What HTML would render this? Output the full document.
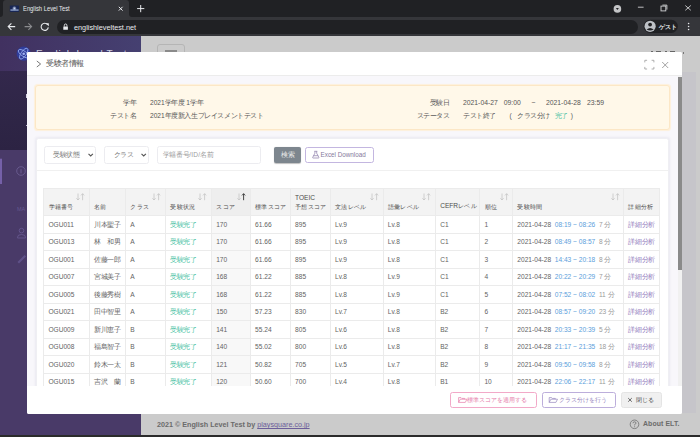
<!DOCTYPE html>
<html><head><meta charset="utf-8">
<style>
*{box-sizing:border-box;margin:0;padding:0}
html,body{width:700px;height:437px;overflow:hidden;background:#cbcbcb;font-family:"Liberation Sans",sans-serif;}
.abs{position:absolute}
/* chrome */
#tabstrip{left:0;top:0;width:700px;height:17px;background:#202124}
#tab{left:3px;top:0;width:126px;height:17px;background:#35363a;border-radius:3px 3px 0 0}
#toolbar{left:0;top:17px;width:700px;height:19px;background:#35363a}
#omni{left:56.8px;top:19.5px;width:581.7px;height:14px;background:#202124;border-radius:7px}
.ct{color:#e8eaed;font-size:7.6px;white-space:nowrap}
/* page */
#sidebar{left:0;top:36px;width:141px;height:401px;background:#493a68}
#sbhead{left:0;top:36px;width:141px;height:35px;background:linear-gradient(90deg,#413160,#454071)}
#sbstars{left:0;top:71px;width:141px;height:79px;background:linear-gradient(180deg,#33284c,#2f2647 50%,#2c2343)}
#main{left:141px;top:36px;width:559px;height:401px;background:#cbcbcb}
#bottomline{left:0;top:435px;width:700px;height:2px;background:#2b2b2b}
/* modal */
#modal{left:27px;top:52px;width:655px;height:362px;background:#fff;border-radius:2px;overflow:hidden}
#mhead{left:0;top:0;width:655px;height:24px;border-bottom:1px solid #ececec;background:#fff}
#mbody{left:0;top:24px;width:651px;height:310px;background:#f8f7fb;overflow:hidden}
#mscroll{left:651px;top:24px;width:4px;height:310px;background:#f1f1f1}
#mthumb{left:651px;top:25px;width:4px;height:193px;background:#8a8a8a}
#mfoot{left:0;top:334px;width:655px;height:28px;background:#fff}
.t{font-size:6.6px;color:#555;white-space:nowrap;line-height:1}
#info{left:8px;top:9px;width:634.5px;height:45px;background:#fff8e9;border:1px solid #fce7c6;border-radius:3px;box-shadow:0 0 0.8px 0.6px #fdf0dc}
#card{left:8.5px;top:62px;width:633px;height:300px;background:#fff;border:1px solid #efeff3;border-radius:2.5px;box-shadow:0 0 2.5px 0.5px rgba(60,50,110,0.07)}
.sel{height:18px;border:1px solid #ececf0;border-radius:2.5px;background:#fff}
table{border-collapse:collapse;table-layout:fixed;position:absolute;left:6.6px;top:49.2px;width:616.1px}
td,th{border:1px solid #ebebeb;font-size:6.6px;color:#636363;font-weight:normal;text-align:left;white-space:nowrap;overflow:hidden;padding:0 0 0 4.3px;height:17.56px;line-height:1;padding-top:1px}
th{background:#f3f3f3;height:26.9px;vertical-align:bottom;padding-bottom:5.3px;font-size:6.25px;color:#4d4d4d;position:relative}
th.sorted{background:#eeeeee}
td.sorted{background:#f8f8f8}
.si{position:absolute;right:3.5px;top:4.3px}
.g{color:#46bfa2}
.b{color:#5b9edb}
.l{color:#9a9a9a}
.p{color:#917dbd;letter-spacing:0.3px}
.btn{height:16.5px;border:1px solid;border-radius:2px;font-size:6.6px;white-space:nowrap;display:flex;align-items:center;justify-content:center}
i{font-style:normal;display:inline-block;width:1em;text-align:center}
</style></head><body>
<!-- chrome -->
<div id="tabstrip" class="abs"></div>
<div id="tab" class="abs"></div>
<div id="toolbar" class="abs"></div>
<div id="omni" class="abs"></div>
<svg class="abs" style="left:0;top:0" width="700" height="36">
  <!-- tab corners -->
  <path d="M0 17 Q3 17 3 14 L3 17 Z" fill="#35363a"/>
  <path d="M129 14 Q129 17 132 17 L129 17 Z" fill="#35363a"/>
  <!-- favicon -->
  <defs><radialGradient id="fg" cx="0.5" cy="0.5" r="0.5"><stop offset="0" stop-color="#d6e4ff"/><stop offset="1" stop-color="#d6e4ff" stop-opacity="0"/></radialGradient></defs>
  <rect x="9.8" y="5.5" width="9.3" height="6.4" rx="0.6" fill="#182654"/>
  <circle cx="14.4" cy="8.3" r="2.4" fill="url(#fg)"/>
  <rect x="10.4" y="9.5" width="8.2" height="1.1" fill="#a9bde6"/>
  <!-- tab close -->
  <path d="M118.8 6.8 L122.6 10.6 M122.6 6.8 L118.8 10.6" stroke="#e8eaed" stroke-width="1" fill="none"/>
  <!-- new tab plus -->
  <path d="M140.7 5 V12.2 M137.1 8.6 H144.3" stroke="#e8eaed" stroke-width="1" fill="none"/>
  <!-- back -->
  <path d="M15.2 26.6 H8.2 M11.4 23.4 L8.2 26.6 L11.4 29.8" stroke="#e8eaed" stroke-width="1.1" fill="none"/>
  <!-- forward -->
  <path d="M24.6 26.6 H31.6 M28.4 23.4 L31.6 26.6 L28.4 29.8" stroke="#8a8b8e" stroke-width="1.1" fill="none"/>
  <!-- reload -->
  <path d="M47.6 24.6 A3.6 3.6 0 1 0 48.3 27.3" stroke="#e8eaed" stroke-width="1.1" fill="none"/>
  <path d="M45.6 23.3 L48.8 23.3 L48.8 26.3 Z" fill="#e8eaed"/>
  <!-- lock -->
  <rect x="63.3" y="26.4" width="4.6" height="3.4" rx="0.4" fill="#e8eaed"/>
  <path d="M64.3 26.6 V25.3 A1.3 1.3 0 0 1 66.9 25.3 V26.6" stroke="#e8eaed" stroke-width="0.9" fill="none"/>
  <!-- window controls -->
  <circle cx="617.4" cy="8.9" r="3.8" fill="#c4c5c7"/>
  <path d="M615.9 8 L618.9 8 L617.4 10.1 Z" fill="#202124"/>
  <path d="M637.9 7.2 H643.6" stroke="#d0d1d3" stroke-width="0.9"/>
  <rect x="661" y="6.1" width="4.8" height="4.8" stroke="#d0d1d3" stroke-width="0.9" fill="none"/>
  <path d="M662.4 5.1 H666.9 V9.6" stroke="#d0d1d3" stroke-width="0.9" fill="none"/>
  <path d="M685.3 5.5 L690.8 10.3 M690.8 5.5 L685.3 10.3" stroke="#d0d1d3" stroke-width="0.9" fill="none"/>
  <!-- profile pill -->
  <rect x="643.6" y="19.7" width="34.3" height="13.3" rx="6.65" fill="#202124"/>
  <circle cx="650.1" cy="26.3" r="5.6" fill="#bdc1c6"/>
  <circle cx="650.1" cy="24.6" r="1.9" fill="#202124"/>
  <path d="M646.6 29.4 Q650.1 26.4 653.6 29.4 Q650.1 31.6 646.6 29.4 Z" fill="#202124"/>
  <!-- menu dots -->
  <circle cx="688.6" cy="23.5" r="0.8" fill="#e8eaed"/>
  <circle cx="688.6" cy="26.5" r="0.8" fill="#e8eaed"/>
  <circle cx="688.6" cy="29.5" r="0.8" fill="#e8eaed"/>
</svg>
<div class="abs ct" style="left:22.8px;top:4.9px;font-size:7px;color:#e8eaed;transform:scaleX(0.83);transform-origin:0 0">English Level Test</div>
<div class="abs ct" style="left:74px;top:23.2px;font-size:7.3px">englishleveltest.net</div>
<div class="abs ct" style="left:659.3px;top:23px;font-size:6px;font-weight:bold"><i>ゲ</i><i>ス</i><i>ト</i></div>
<!-- page -->
<div id="sidebar" class="abs"></div>
<div id="sbhead" class="abs"></div>
<div id="sbstars" class="abs"></div>
<div id="main" class="abs"></div>
<div class="abs" style="left:25.5px;top:94px;width:1.5px;height:4px;background:#d8d4e4"></div>
<div class="abs" style="left:25.5px;top:124.5px;width:1.5px;height:1.2px;background:#bdb6d0"></div>
<div class="abs" style="left:651px;top:50.6px;width:1.5px;height:1.6px;background:#666"></div>
<div class="abs" style="left:656px;top:50.6px;width:5px;height:1.6px;background:#666"></div>
<div class="abs" style="left:665px;top:50.6px;width:1.5px;height:1.6px;background:#666"></div>
<div class="abs" style="left:669.5px;top:50.6px;width:5.5px;height:1.6px;background:#666"></div>
<div class="abs" style="left:683px;top:52px;width:1.2px;height:2px;background:#777"></div>
<div class="abs" style="left:682px;top:72px;width:13.8px;height:340.5px;background:#c6c5ca"></div>
<svg class="abs" style="left:0;top:36px" width="141" height="401">
  <circle cx="23.7" cy="17.7" r="7.1" fill="#2f3c9a"/>
  <ellipse cx="23.7" cy="17.7" rx="6.3" ry="2.6" transform="rotate(-55 23.7 17.7)" stroke="#8fa6ea" stroke-width="0.9" fill="none"/>
  <ellipse cx="23.7" cy="17.7" rx="6.3" ry="2.6" transform="rotate(35 23.7 17.7)" stroke="#8fa6ea" stroke-width="0.9" fill="none"/>
  <circle cx="23.7" cy="17.7" r="1.3" fill="#9fb3f0"/>
  <rect x="0" y="122.7" width="2" height="25.3" fill="#7560a8"/>
  <circle cx="21" cy="135" r="4.3" stroke="#6f6196" stroke-width="0.8" fill="none"/>
  <path d="M21 133.2 V137.4" stroke="#6f6196" stroke-width="0.9"/>
  <path d="M17.5 201.3 Q17.5 198.5 21.5 198.5 Q25.5 198.5 25.5 201.3 V202 H17.5 Z" stroke="#6a5b94" stroke-width="0.8" fill="none"/>
  <circle cx="21.5" cy="194.6" r="2.3" stroke="#6a5b94" stroke-width="0.8" fill="none"/>
  <path d="M17.5 226 L24.5 219 L26 220.5 L19 227.5 Z" fill="#5f5188"/>
</svg>
<div class="abs" style="left:17px;top:205.7px;font-size:5.5px;color:#64578f;white-space:nowrap">MA</div>
<div class="abs" style="left:36px;top:49px;font-size:10px;color:#cfd0e0;white-space:nowrap;letter-spacing:0.6px">English Level Test</div>
<div class="abs" style="left:157px;top:44px;width:28px;height:20px;border:1px solid #b5b5b5;border-radius:3px"></div>
<div class="abs" style="left:165px;top:50.3px;width:12px;height:1.4px;background:#8a8a8a"></div>
<div class="abs" style="left:157px;top:420px;font-size:7.2px;color:#6a6a6a;font-weight:bold;white-space:nowrap">2021 © English Level Test by <span style="color:#6c5e9a;text-decoration:underline;font-weight:normal">playsquare.co.jp</span></div>
<div class="abs" style="left:643px;top:420.2px;font-size:6.9px;color:#6a6a6a;font-weight:bold;white-space:nowrap;letter-spacing:0.1px">About ELT.</div>
<svg class="abs" style="left:628px;top:418px" width="14" height="14"><circle cx="6.5" cy="6.3" r="4.3" stroke="#6e6e6e" stroke-width="0.8" fill="none"/><path d="M5 5.2 Q5 3.8 6.5 3.8 Q8 3.8 8 5.1 Q8 6 6.6 6.6 V7.4" stroke="#6e6e6e" stroke-width="0.8" fill="none"/><circle cx="6.6" cy="8.8" r="0.5" fill="#6e6e6e"/></svg>
<div id="bottomline" class="abs"></div>

<!-- modal -->
<div id="modal" class="abs">
  <div id="mhead" class="abs">
    <svg class="abs" style="left:0;top:0" width="655" height="24">
      <path d="M9.8 9 L13.6 12 L9.8 15" stroke="#666" stroke-width="0.9" fill="none"/>
      <path d="M617.8 10.4 V8.3 H620.1 M624.6 8.3 H626.9 V10.4 M626.9 14.9 V17 H624.6 M620.1 17 H617.8 V14.9" stroke="#9a9a9a" stroke-width="0.8" fill="none"/>
      <path d="M635.2 10 L641.2 16 M641.2 10 L635.2 16" stroke="#8a8a8a" stroke-width="0.8" fill="none"/>
    </svg>
    <div class="abs t" style="left:19px;top:8px;font-size:7.6px;color:#555"><i>受</i><i>験</i><i>者</i><i>情</i><i>報</i></div>
  </div>
  <div id="mbody" class="abs">
    <div id="info" class="abs">
      <div class="abs t" style="right:532px;top:13.8px"><i>学</i><i>年</i></div>
      <div class="abs t" style="left:114px;top:13.8px">2021<i>学</i><i>年</i><i>度</i> 1<i>学</i><i>年</i></div>
      <div class="abs t" style="right:532px;top:26.9px"><i>テ</i><i>ス</i><i>ト</i><i>名</i></div>
      <div class="abs t" style="left:114px;top:26.9px">2021<i>年</i><i>度</i><i>新</i><i>入</i><i>生</i><i>プ</i><i>レ</i><i>イ</i><i>ス</i><i>メ</i><i>ン</i><i>ト</i><i>テ</i><i>ス</i><i>ト</i></div>
      <div class="abs t" style="right:219px;top:13.8px"><i>受</i><i>験</i><i>日</i></div>
      <div class="abs t" style="left:427px;top:13.8px;font-size:6.8px">2021-04-27</div>
      <div class="abs t" style="left:467.8px;top:13.8px;font-size:6.8px">09:00</div>
      <div class="abs t" style="left:495.5px;top:13.8px;font-size:6.8px">~</div>
      <div class="abs t" style="left:510px;top:13.8px;font-size:6.8px">2021-04-28</div>
      <div class="abs t" style="left:551px;top:13.8px;font-size:6.8px">23:59</div>
      <div class="abs t" style="right:219px;top:26.9px"><i>ス</i><i>テ</i><i>ー</i><i>タ</i><i>ス</i></div>
      <div class="abs t" style="left:427px;top:26.9px"><i>テ</i><i>ス</i><i>ト</i><i>終</i><i>了</i></div>
      <div class="abs t" style="left:473.5px;top:26.9px">(</div>
      <div class="abs t" style="left:481px;top:26.9px;letter-spacing:0.3px"><i>ク</i><i>ラ</i><i>ス</i><i>分</i><i>け</i></div>
      <div class="abs t g" style="left:518.7px;top:26.9px"><i>完</i><i>了</i></div>
      <div class="abs t" style="left:534.8px;top:26.9px">)</div>
    </div>
    <div id="card" class="abs">
      <div class="abs sel" style="left:7.5px;top:7.3px;width:52px"></div>
      <div class="abs t" style="left:16.5px;top:13px;color:#777"><i>受</i><i>験</i><i>状</i><i>態</i></div>
      <div class="abs sel" style="left:67.5px;top:7.3px;width:45px"></div>
      <div class="abs t" style="left:77px;top:13px;color:#777;letter-spacing:0.3px"><i>ク</i><i>ラ</i><i>ス</i></div>
      <div class="abs sel" style="left:120.5px;top:7.3px;width:104px"></div>
      <div class="abs t" style="left:126.4px;top:13.4px;color:#9c9c9c;font-size:6.6px;letter-spacing:0.2px"><i>学</i><i>籍</i><i>番</i><i>号</i>/ID/<i>名</i><i>前</i></div>
      <svg class="abs" style="left:0;top:0" width="400" height="30">
        <path d="M51.5 14.8 L53.7 17 L55.9 14.8" stroke="#555" stroke-width="1.1" fill="none"/>
        <path d="M104.5 14.8 L106.7 17 L108.9 14.8" stroke="#555" stroke-width="1.1" fill="none"/>
      </svg>
      <div class="abs" style="left:237.5px;top:7.5px;width:27.3px;height:16.5px;background:#7d868e;border-radius:2px;box-shadow:0 0.5px 1px rgba(0,0,0,0.25)"></div>
      <div class="abs t" style="left:244.5px;top:12.8px;color:#e8e8e8;font-size:6.5px"><i>検</i><i>索</i></div>
      <div class="abs" style="left:268.3px;top:7.5px;width:69.5px;height:16.5px;border:1px solid #c3b6e0;border-radius:2.5px;background:#fff"></div>
      <svg class="abs" style="left:0;top:0" width="400" height="30">
        <path d="M277.9 12.3 V14.2 L275.7 18.4 Q275.5 19 276.1 19 H281.5 Q282.1 19 281.9 18.4 L279.7 14.2 V12.3" stroke="#8a7aa8" stroke-width="0.7" fill="none"/>
        <path d="M277.3 12.3 H280.3 M276.5 16.7 H281.1" stroke="#8a7aa8" stroke-width="0.7" fill="none"/>
      </svg>
      <div class="abs t" style="left:284.1px;top:13px;color:#857a9c;font-size:6.3px">Excel Download</div>
      <div class="abs" style="left:0;top:31px;width:631px;height:1px;background:#f0f0f0"></div>
      <table>
        <colgroup><col style="width:45.7px"><col style="width:36.1px"><col style="width:40px"><col style="width:46px"><col style="width:38.9px"><col style="width:40px"><col style="width:40px"><col style="width:52.8px"><col style="width:52.3px"><col style="width:44.3px"><col style="width:32.9px"><col style="width:111px"><col style="width:36.1px"></colgroup>
        <tr><th><i>学</i><i>籍</i><i>番</i><i>号</i><svg class="si" width="9" height="8" viewBox="0 0 9 8"><path d="M2 0.5 V7 M0.4 5.3 L2 7 L3.6 5.3" stroke="#c4c4c4" stroke-width="0.8" fill="none"/><path d="M6.6 7.2 V0.7 M5 2.4 L6.6 0.7 L8.2 2.4" stroke="#c4c4c4" stroke-width="0.8" fill="none"/></svg></th><th><i>名</i><i>前</i></th><th><i>ク</i><i>ラ</i><i>ス</i><svg class="si" width="9" height="8" viewBox="0 0 9 8"><path d="M2 0.5 V7 M0.4 5.3 L2 7 L3.6 5.3" stroke="#c4c4c4" stroke-width="0.8" fill="none"/><path d="M6.6 7.2 V0.7 M5 2.4 L6.6 0.7 L8.2 2.4" stroke="#c4c4c4" stroke-width="0.8" fill="none"/></svg></th><th><i>受</i><i>験</i><i>状</i><i>況</i><svg class="si" width="9" height="8" viewBox="0 0 9 8"><path d="M2 0.5 V7 M0.4 5.3 L2 7 L3.6 5.3" stroke="#c4c4c4" stroke-width="0.8" fill="none"/><path d="M6.6 7.2 V0.7 M5 2.4 L6.6 0.7 L8.2 2.4" stroke="#c4c4c4" stroke-width="0.8" fill="none"/></svg></th><th class="sorted"><i>ス</i><i>コ</i><i>ア</i><svg class="si" width="9" height="8" viewBox="0 0 9 8"><path d="M2 0.5 V7 M0.4 5.3 L2 7 L3.6 5.3" stroke="#c4c4c4" stroke-width="0.8" fill="none"/><path d="M6.6 7.2 V0.7 M5 2.4 L6.6 0.7 L8.2 2.4" stroke="#333" stroke-width="0.9" fill="none"/></svg></th><th><i>標</i><i>準</i><i>ス</i><i>コ</i><i>ア</i></th><th><span style="font-size:6.6px;display:block;margin-bottom:2.3px">TOEIC</span><i>予</i><i>想</i><i>ス</i><i>コ</i><i>ア</i></th><th><i>文</i><i>法</i><i>レ</i><i>ベ</i><i>ル</i><svg class="si" width="9" height="8" viewBox="0 0 9 8"><path d="M2 0.5 V7 M0.4 5.3 L2 7 L3.6 5.3" stroke="#c4c4c4" stroke-width="0.8" fill="none"/><path d="M6.6 7.2 V0.7 M5 2.4 L6.6 0.7 L8.2 2.4" stroke="#c4c4c4" stroke-width="0.8" fill="none"/></svg></th><th><i>語</i><i>彙</i><i>レ</i><i>ベ</i><i>ル</i><svg class="si" width="9" height="8" viewBox="0 0 9 8"><path d="M2 0.5 V7 M0.4 5.3 L2 7 L3.6 5.3" stroke="#c4c4c4" stroke-width="0.8" fill="none"/><path d="M6.6 7.2 V0.7 M5 2.4 L6.6 0.7 L8.2 2.4" stroke="#c4c4c4" stroke-width="0.8" fill="none"/></svg></th><th><span style="font-size:6.6px">CEFR</span><i>レ</i><i>ベ</i><i>ル</i></th><th><i>順</i><i>位</i><svg class="si" width="9" height="8" viewBox="0 0 9 8"><path d="M2 0.5 V7 M0.4 5.3 L2 7 L3.6 5.3" stroke="#c4c4c4" stroke-width="0.8" fill="none"/><path d="M6.6 7.2 V0.7 M5 2.4 L6.6 0.7 L8.2 2.4" stroke="#c4c4c4" stroke-width="0.8" fill="none"/></svg></th><th><i>受</i><i>験</i><i>時</i><i>間</i><svg class="si" width="9" height="8" viewBox="0 0 9 8"><path d="M2 0.5 V7 M0.4 5.3 L2 7 L3.6 5.3" stroke="#c4c4c4" stroke-width="0.8" fill="none"/><path d="M6.6 7.2 V0.7 M5 2.4 L6.6 0.7 L8.2 2.4" stroke="#c4c4c4" stroke-width="0.8" fill="none"/></svg></th><th><i>詳</i><i>細</i><i>分</i><i>析</i></th></tr>
        <tr><td>OGU011</td><td><i>川</i><i>本</i><i>聖</i><i>子</i></td><td>A</td><td class="g"><i>受</i><i>験</i><i>完</i><i>了</i></td><td class="sorted">170</td><td>61.66</td><td>895</td><td>Lv.9</td><td>Lv.8</td><td>C1</td><td>1</td><td>2021-04-28 &nbsp;<span class="b">08:19 ~ 08:26</span>&nbsp; <span class="l">7 <i>分</i></span></td><td class="p"><i>詳</i><i>細</i><i>分</i><i>析</i></td></tr>
<tr><td>OGU013</td><td><i>林</i><i>　</i><i>和</i><i>男</i></td><td>A</td><td class="g"><i>受</i><i>験</i><i>完</i><i>了</i></td><td class="sorted">170</td><td>61.66</td><td>895</td><td>Lv.9</td><td>Lv.8</td><td>C1</td><td>2</td><td>2021-04-28 &nbsp;<span class="b">08:49 ~ 08:57</span>&nbsp; <span class="l">8 <i>分</i></span></td><td class="p"><i>詳</i><i>細</i><i>分</i><i>析</i></td></tr>
<tr><td>OGU001</td><td><i>佐</i><i>藤</i><i>一</i><i>郎</i></td><td>A</td><td class="g"><i>受</i><i>験</i><i>完</i><i>了</i></td><td class="sorted">170</td><td>61.66</td><td>895</td><td>Lv.9</td><td>Lv.8</td><td>C1</td><td>3</td><td>2021-04-28 &nbsp;<span class="b">14:43 ~ 20:18</span>&nbsp; <span class="l">8 <i>分</i></span></td><td class="p"><i>詳</i><i>細</i><i>分</i><i>析</i></td></tr>
<tr><td>OGU007</td><td><i>宮</i><i>城</i><i>美</i><i>子</i></td><td>A</td><td class="g"><i>受</i><i>験</i><i>完</i><i>了</i></td><td class="sorted">168</td><td>61.22</td><td>885</td><td>Lv.8</td><td>Lv.9</td><td>C1</td><td>4</td><td>2021-04-28 &nbsp;<span class="b">20:22 ~ 20:29</span>&nbsp; <span class="l">7 <i>分</i></span></td><td class="p"><i>詳</i><i>細</i><i>分</i><i>析</i></td></tr>
<tr><td>OGU005</td><td><i>後</i><i>藤</i><i>秀</i><i>樹</i></td><td>A</td><td class="g"><i>受</i><i>験</i><i>完</i><i>了</i></td><td class="sorted">168</td><td>61.22</td><td>885</td><td>Lv.8</td><td>Lv.9</td><td>C1</td><td>5</td><td>2021-04-28 &nbsp;<span class="b">07:52 ~ 08:02</span>&nbsp; <span class="l">11 <i>分</i></span></td><td class="p"><i>詳</i><i>細</i><i>分</i><i>析</i></td></tr>
<tr><td>OGU021</td><td><i>田</i><i>中</i><i>智</i><i>里</i></td><td>A</td><td class="g"><i>受</i><i>験</i><i>完</i><i>了</i></td><td class="sorted">150</td><td>57.23</td><td>830</td><td>Lv.7</td><td>Lv.8</td><td>B2</td><td>6</td><td>2021-04-28 &nbsp;<span class="b">08:57 ~ 09:20</span>&nbsp; <span class="l">23 <i>分</i></span></td><td class="p"><i>詳</i><i>細</i><i>分</i><i>析</i></td></tr>
<tr><td>OGU009</td><td><i>新</i><i>川</i><i>恵</i><i>子</i></td><td>B</td><td class="g"><i>受</i><i>験</i><i>完</i><i>了</i></td><td class="sorted">141</td><td>55.24</td><td>805</td><td>Lv.6</td><td>Lv.8</td><td>B2</td><td>7</td><td>2021-04-28 &nbsp;<span class="b">20:33 ~ 20:39</span>&nbsp; <span class="l">5 <i>分</i></span></td><td class="p"><i>詳</i><i>細</i><i>分</i><i>析</i></td></tr>
<tr><td>OGU008</td><td><i>福</i><i>島</i><i>智</i><i>子</i></td><td>B</td><td class="g"><i>受</i><i>験</i><i>完</i><i>了</i></td><td class="sorted">140</td><td>55.02</td><td>800</td><td>Lv.6</td><td>Lv.8</td><td>B2</td><td>8</td><td>2021-04-28 &nbsp;<span class="b">21:17 ~ 21:35</span>&nbsp; <span class="l">18 <i>分</i></span></td><td class="p"><i>詳</i><i>細</i><i>分</i><i>析</i></td></tr>
<tr><td>OGU020</td><td><i>鈴</i><i>木</i><i>一</i><i>太</i></td><td>B</td><td class="g"><i>受</i><i>験</i><i>完</i><i>了</i></td><td class="sorted">121</td><td>50.82</td><td>705</td><td>Lv.5</td><td>Lv.7</td><td>B2</td><td>9</td><td>2021-04-28 &nbsp;<span class="b">09:50 ~ 09:58</span>&nbsp; <span class="l">8 <i>分</i></span></td><td class="p"><i>詳</i><i>細</i><i>分</i><i>析</i></td></tr>
<tr><td>OGU015</td><td><i>吉</i><i>沢</i><i>　</i><i>蘭</i></td><td>B</td><td class="g"><i>受</i><i>験</i><i>完</i><i>了</i></td><td class="sorted">120</td><td>50.60</td><td>700</td><td>Lv.4</td><td>Lv.8</td><td>B1</td><td>10</td><td>2021-04-28 &nbsp;<span class="b">22:06 ~ 22:17</span>&nbsp; <span class="l">11 <i>分</i></span></td><td class="p"><i>詳</i><i>細</i><i>分</i><i>析</i></td></tr>
      </table>
    </div>
  </div>
  <div id="mscroll" class="abs"></div>
  <div id="mthumb" class="abs"></div>
  <div id="mfoot" class="abs">
    <div class="abs" style="left:423.4px;top:5.6px;width:87px;height:16.4px;border:1px solid #f2a9c8;border-radius:2.5px"></div>
    <div class="abs t" style="left:440.4px;top:11.3px;color:#e57aa9;font-size:6px;letter-spacing:0.16px"><i>標</i><i>準</i><i>ス</i><i>コ</i><i>ア</i><i>を</i><i>適</i><i>用</i><i>す</i><i>る</i></div>
    <div class="abs" style="left:515.4px;top:5.6px;width:73.2px;height:16.4px;border:1px solid #bcaedb;border-radius:2.5px"></div>
    <div class="abs t" style="left:532px;top:11.3px;color:#9585bd;font-size:6px;letter-spacing:0.12px"><i>ク</i><i>ラ</i><i>ス</i><i>分</i><i>け</i><i>を</i><i>行</i><i>う</i></div>
    <div class="abs" style="left:594px;top:5.6px;width:41.4px;height:16.4px;border:1px solid #e4e4e4;background:#f0f0f0;border-radius:2.5px"></div>
    <div class="abs t" style="left:608.6px;top:11.2px;color:#555;font-size:6.3px"><i>閉</i><i>じ</i><i>る</i></div>
    <svg class="abs" style="left:0;top:0" width="655" height="28">
      <path d="M431.6 11.6 V16.4 H438.3 L439.9 13.2 H433.3 L431.6 16.4 M431.6 11.6 H434 L434.8 12.4 H437.7 V13.2" stroke="#e57aa9" stroke-width="0.7" fill="none"/>
      <path d="M522.2 11.6 V16.4 H528.9 L530.5 13.2 H523.9 L522.2 16.4 M522.2 11.6 H524.6 L525.4 12.4 H528.3 V13.2" stroke="#9585bd" stroke-width="0.7" fill="none"/>
      <path d="M601.2 12.1 L604.8 15.7 M604.8 12.1 L601.2 15.7" stroke="#444" stroke-width="0.8" fill="none"/>
    </svg>
  </div>
</div>
</body></html>
